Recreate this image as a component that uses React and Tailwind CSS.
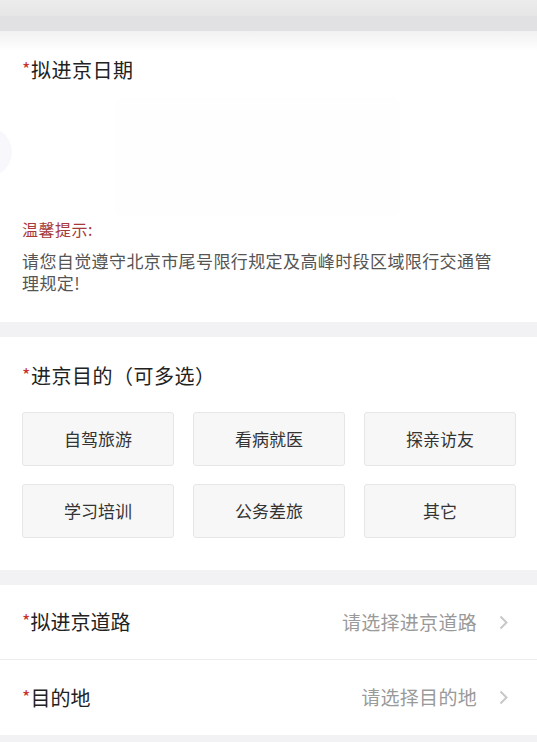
import React from "react";

const font = { fontFamily: '"Noto Sans CJK SC", "Noto Sans", sans-serif' };

function Star() {
  return <span className="text-[#c9302c] text-[18px] leading-[20px] align-top relative top-[2px]">*</span>;
}

function Chevron() {
  return (
    <svg width="9" height="15" viewBox="0 0 9 15" className="ml-[22px]">
      <path d="M1.5 1.5 L7.5 7.5 L1.5 13.5" fill="none" stroke="#c8c8c8" strokeWidth="2" />
    </svg>
  );
}

function SelectRow({ label, placeholder, border }) {
  return (
    <div className={`h-[75px] flex items-center pl-[22px] pr-[29px] bg-white ${border ? "border-b border-[#ececec]" : ""}`}>
      <div className="text-[20px] leading-[28px] text-[#222]"><Star />{label}</div>
      <div className="ml-auto flex items-center">
        <span className="text-[19px] text-[#9a9a9a] tracking-[0.3px]">{placeholder}</span>
        <Chevron />
      </div>
    </div>
  );
}

export default function App() {
  const opts = ["自驾旅游", "看病就医", "探亲访友", "学习培训", "公务差旅", "其它"];
  return (
    <div className="w-[537px] h-[742px] overflow-hidden bg-[#f2f2f4]" style={font}>
      <div className="h-[16px] bg-gradient-to-b from-[#ececec] to-[#e6e6e6]" />
      <div className="h-[15px] bg-[#e1e1e3]" />
      <div className="relative bg-gradient-to-b from-[#f1f1f1] via-white to-white bg-[length:100%_40px] bg-no-repeat bg-white pt-[25px] pb-[28px]">
        <div className="pl-[22px] text-[20px] leading-[28px] text-[#222] tracking-[0.5px]"><Star />拟进京日期</div>
        <div className="relative h-[133px]">
          <div className="absolute left-[-38px] top-[43px] w-[50px] h-[50px] rounded-full bg-[#f8f8fc]" />
          <div className="absolute left-[115px] top-[14px] w-[285px] h-[118px] bg-[#fefefe] rounded-[6px]" />
        </div>
        <div className="pl-[22px] pr-[40px]">
          <div className="text-[16px] leading-[24px] text-[#a8383a] tracking-[0.5px]">温馨提示:</div>
          <div className="mt-[9px] text-[17px] leading-[22px] text-[#555] tracking-[0.4px]">
            请您自觉遵守北京市尾号限行规定及高峰时段区域限行交通管理规定!
          </div>
        </div>
      </div>
      <div className="h-[15px]" />
      <div className="bg-white pt-[25px] pb-[32px]">
        <div className="pl-[22px] text-[20px] leading-[28px] text-[#222] tracking-[0.5px]"><Star />进京目的（可多选）</div>
        <div className="mt-[22px] pl-[22px] pr-[21px] grid grid-cols-3 gap-x-[19px] gap-y-[18px]">
          {opts.map((o) => (
            <div key={o} className="h-[54px] flex items-center justify-center bg-[#f7f7f7] border border-[#e6e6e6] rounded-[3px] text-[17px] text-[#333]">
              {o}
            </div>
          ))}
        </div>
      </div>
      <div className="h-[15px]" />
      <SelectRow label="拟进京道路" placeholder="请选择进京道路" border />
      <SelectRow label="目的地" placeholder="请选择目的地" />
    </div>
  );
}
